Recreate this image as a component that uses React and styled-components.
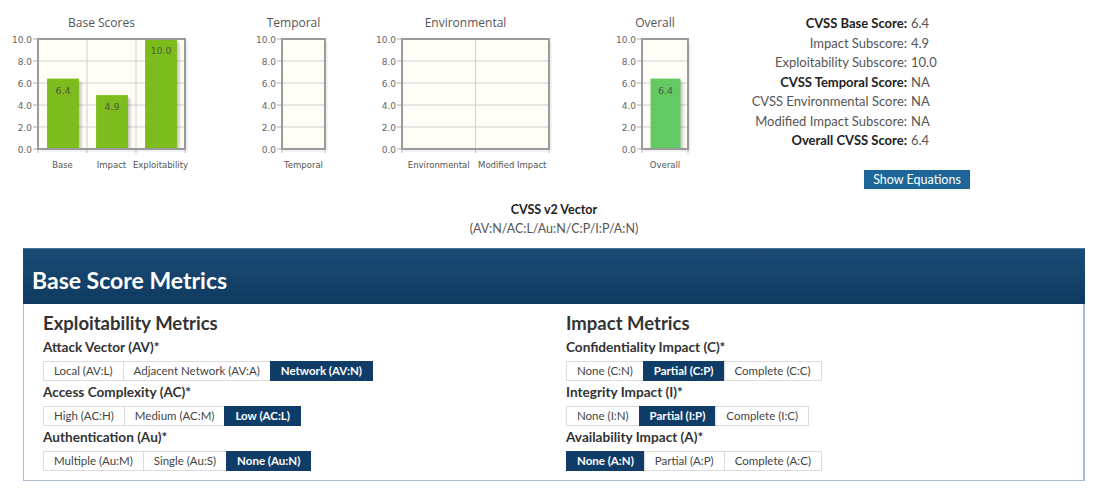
import React from "react";
import styled, { createGlobalStyle } from "styled-components";

const GlobalStyle = createGlobalStyle`
  html, body { margin: 0; padding: 0; background: #ffffff; }
  body { font-family: Lato, "Open Sans", sans-serif; color: #333; }
`;

const Page = styled.div`
  width: 1097px;
  height: 489px;
  overflow: hidden;
`;

const TopRow = styled.div`
  display: flex;
  align-items: flex-start;
  padding-top: 10px;
`;

const ChartSvg = styled.svg`
  display: block;
  flex: none;
  margin-left: ${(p) => p.$ml || 0}px;
  font-family: "DejaVu Sans", Verdana, sans-serif;
`;

const Scores = styled.div`
  margin-left: ${(p) => p.$ml}px;
  margin-top: 4px;
  width: 248px;
  display: flex;
  flex-direction: column;
`;

const ScoreGrid = styled.div`
  display: grid;
  grid-template-columns: 185px auto;
  column-gap: 4px;
  font-size: 13px;
  line-height: 19.5px;
  color: #555;
`;

const ScoreLabel = styled.div`
  text-align: right;
  white-space: nowrap;
  font-weight: ${(p) => (p.$bold ? 700 : 400)};
  color: ${(p) => (p.$bold ? "#222" : "#555")};
`;

const ScoreValue = styled.div`
  white-space: nowrap;
`;

const EqButton = styled.button`
  align-self: flex-end;
  margin-top: 19.5px;
  height: 19px;
  width: 106px;
  padding: 0;
  border: none;
  background: #1e6699;
  color: #fff;
  font-family: Lato, sans-serif;
  font-size: 12.5px;
  font-weight: 400;
  line-height: 19px;
`;

const Vector = styled.div`
  margin: 11px 0 0 23px;
  width: 1062px;
  text-align: center;
  font-size: 12.5px;
  line-height: 19px;
  color: #555;
`;

const VectorTitle = styled.div`
  font-weight: 700;
  color: #222;
`;

const Panel = styled.section`
  margin: 10px 0 0 23px;
  width: 1062px;
`;

const PanelHeader = styled.h2`
  margin: 0;
  height: 56px;
  box-sizing: border-box;
  padding: 6px 0 0 9px;
  display: flex;
  align-items: center;
  background: linear-gradient(#1b4c77, #0e3a60);
  border-top: 1px solid #4d7396;
  color: #fff;
  font-size: 23px;
  font-weight: 700;
`;

const PanelBody = styled.div`
  display: grid;
  grid-template-columns: 499px 1fr;
  column-gap: 24px;
  padding: 8px 19px 10px 19px;
  border: 1px solid #a8bdd1;
  border-right-width: 2px;
  border-top: none;
  box-sizing: border-box;
  height: 177px;
`;

const Column = styled.div`
  display: flex;
  flex-direction: column;
  align-items: flex-start;
`;

const ColTitle = styled.h3`
  margin: 0;
  font-size: 18.5px;
  line-height: 22px;
  font-weight: 700;
  color: #333;
`;

const MetricLabel = styled.div`
  margin-top: ${(p) => (p.$first ? 4 : 2)}px;
  font-size: 13.6px;
  line-height: 18px;
  font-weight: 700;
  color: #333;
`;

const Group = styled.div`
  display: flex;
  margin-top: 5px;
`;

const Opt = styled.span`
  box-sizing: border-box;
  height: 20px;
  padding: 0 10px;
  line-height: 18px;
  font-size: 11.5px;
  white-space: nowrap;
  border: 1px solid ${(p) => (p.$on ? "#103d68" : "#dcdcdc")};
  margin-left: -1px;
  &:first-child { margin-left: 0; }
  background: ${(p) => (p.$on ? "#103d68" : "#fff")};
  color: ${(p) => (p.$on ? "#fff" : "#444")};
  font-weight: ${(p) => (p.$on ? 700 : 400)};
`;

const TOP = 29; // plot top in svg coords
const PH = 110; // plot height

function Chart({ ml, title, plotLeft = 38, plotWidth, cats, values, color }) {
  const w = plotLeft + plotWidth + 12;
  const catW = plotWidth / cats.length;
  const bottom = TOP + PH;
  const ticks = [0, 2, 4, 6, 8, 10];
  const titleX = (plotLeft - 28 + plotLeft + plotWidth + 8) / 2;
  const barW = catW * 0.65;
  return (
    <ChartSvg $ml={ml} width={w} height={165} viewBox={`0 0 ${w} 165`}>
      <text x={titleX} y={17} textAnchor="middle" fontSize="12" fill="#555" fontFamily="'Open Sans', sans-serif">
        {title}
      </text>
      <rect x={plotLeft + 1.5} y={TOP + 1.5} width={plotWidth} height={PH} fill="#000" opacity="0.06" />
      <rect x={plotLeft + 3} y={TOP + 3} width={plotWidth} height={PH} fill="#000" opacity="0.04" />
      <rect x={plotLeft} y={TOP} width={plotWidth} height={PH} fill="#fffdf6" />
      {ticks.map((t) => {
        const y = bottom - t * 11;
        return (
          <g key={t}>
            {t !== 0 && t !== 10 && (
              <line x1={plotLeft} x2={plotLeft + plotWidth} y1={y} y2={y} stroke="#dedede" strokeWidth="1.5" />
            )}
            <line x1={plotLeft - 5} x2={plotLeft} y1={y} y2={y} stroke="#aaa" strokeWidth="1" />
            <text x={plotLeft - 6} y={y + 3.5} textAnchor="end" fontSize="9" fill="#666">
              {t.toFixed(1)}
            </text>
          </g>
        );
      })}
      {cats.map((c, i) => {
        const x = plotLeft + i * catW;
        return (
          <g key={c}>
            {i > 0 && <line x1={x} x2={x} y1={TOP} y2={bottom} stroke="#d0d0d0" strokeWidth="1" />}
            <line x1={x} x2={x} y1={bottom} y2={bottom + 4} stroke="#bbb" strokeWidth="1" />
            <text x={x + catW / 2} y={bottom + 19} textAnchor="middle" fontSize="8.5" fill="#555">
              {c}
            </text>
          </g>
        );
      })}
      <line x1={plotLeft + plotWidth} x2={plotLeft + plotWidth} y1={bottom} y2={bottom + 4} stroke="#bbb" />
      {values &&
        values.map((v, i) => {
          const h = v * 11;
          const x = plotLeft + i * catW + (catW - barW) / 2 + 0.5;
          const y = bottom - h;
          return (
            <g key={i}>
              <rect x={x + 1.5} y={y + 1.5} width={barW} height={h - 1.5} fill="#000" opacity="0.1" />
              <rect x={x + 3} y={y + 3} width={barW} height={h - 3} fill="#000" opacity="0.07" />
              <rect x={x + 4.5} y={y + 4.5} width={barW} height={h - 4.5} fill="#000" opacity="0.04" />
              <rect x={x} y={y} width={barW} height={h} fill={color} />
              <text x={x + barW / 2} y={y + 15} textAnchor="middle" fontSize="9.5" fill="#4e5a40">
                {v.toFixed(1)}
              </text>
            </g>
          );
        })}
      <rect x={plotLeft} y={TOP} width={plotWidth} height={PH} fill="none" stroke="#9a9a9a" strokeWidth="2" />
    </ChartSvg>
  );
}

const scores = [
  ["CVSS Base Score:", "6.4", true],
  ["Impact Subscore:", "4.9"],
  ["Exploitability Subscore:", "10.0"],
  ["CVSS Temporal Score:", "NA", true],
  ["CVSS Environmental Score:", "NA"],
  ["Modified Impact Subscore:", "NA"],
  ["Overall CVSS Score:", "6.4", true],
];

const exploit = [
  ["Attack Vector (AV)*", ["Local (AV:L)", "Adjacent Network (AV:A)", "Network (AV:N)"], 2],
  ["Access Complexity (AC)*", ["High (AC:H)", "Medium (AC:M)", "Low (AC:L)"], 2],
  ["Authentication (Au)*", ["Multiple (Au:M)", "Single (Au:S)", "None (Au:N)"], 2],
];

const impact = [
  ["Confidentiality Impact (C)*", ["None (C:N)", "Partial (C:P)", "Complete (C:C)"], 1],
  ["Integrity Impact (I)*", ["None (I:N)", "Partial (I:P)", "Complete (I:C)"], 1],
  ["Availability Impact (A)*", ["None (A:N)", "Partial (A:P)", "Complete (A:C)"], 0],
];

function MetricColumn({ title, metrics }) {
  return (
    <Column>
      <ColTitle>{title}</ColTitle>
      {metrics.map(([label, opts, sel], i) => (
        <React.Fragment key={label}>
          <MetricLabel $first={i === 0}>{label}</MetricLabel>
          <Group>
            {opts.map((o, j) => (
              <Opt key={o} $on={j === sel}>
                {o}
              </Opt>
            ))}
          </Group>
        </React.Fragment>
      ))}
    </Column>
  );
}

export default function App() {
  return (
    <Page>
      <GlobalStyle />
      <TopRow>
        <Chart
          ml={0}
          title="Base Scores"
          plotWidth={147}
          cats={["Base", "Impact", "Exploitability"]}
          values={[6.4, 4.9, 10.0]}
          color="#7cbc1c"
        />
        <Chart ml={47} title="Temporal" plotWidth={43} cats={["Temporal"]} />
        <Chart ml={27} title="Environmental" plotWidth={147} cats={["Environmental", "Modified Impact"]} />
        <Chart ml={43} title="Overall" plotWidth={46} cats={["Overall"]} values={[6.4]} color="#63c963" />
        <Scores $ml={22}>
          <ScoreGrid>
            {scores.map(([l, v, b]) => (
              <React.Fragment key={l}>
                <ScoreLabel $bold={b}>{l}</ScoreLabel>
                <ScoreValue>{v}</ScoreValue>
              </React.Fragment>
            ))}
          </ScoreGrid>
          <EqButton>Show Equations</EqButton>
        </Scores>
      </TopRow>
      <Vector>
        <VectorTitle>CVSS v2 Vector</VectorTitle>
        <div>(AV:N/AC:L/Au:N/C:P/I:P/A:N)</div>
      </Vector>
      <Panel>
        <PanelHeader>Base Score Metrics</PanelHeader>
        <PanelBody>
          <MetricColumn title="Exploitability Metrics" metrics={exploit} />
          <MetricColumn title="Impact Metrics" metrics={impact} />
        </PanelBody>
      </Panel>
    </Page>
  );
}
